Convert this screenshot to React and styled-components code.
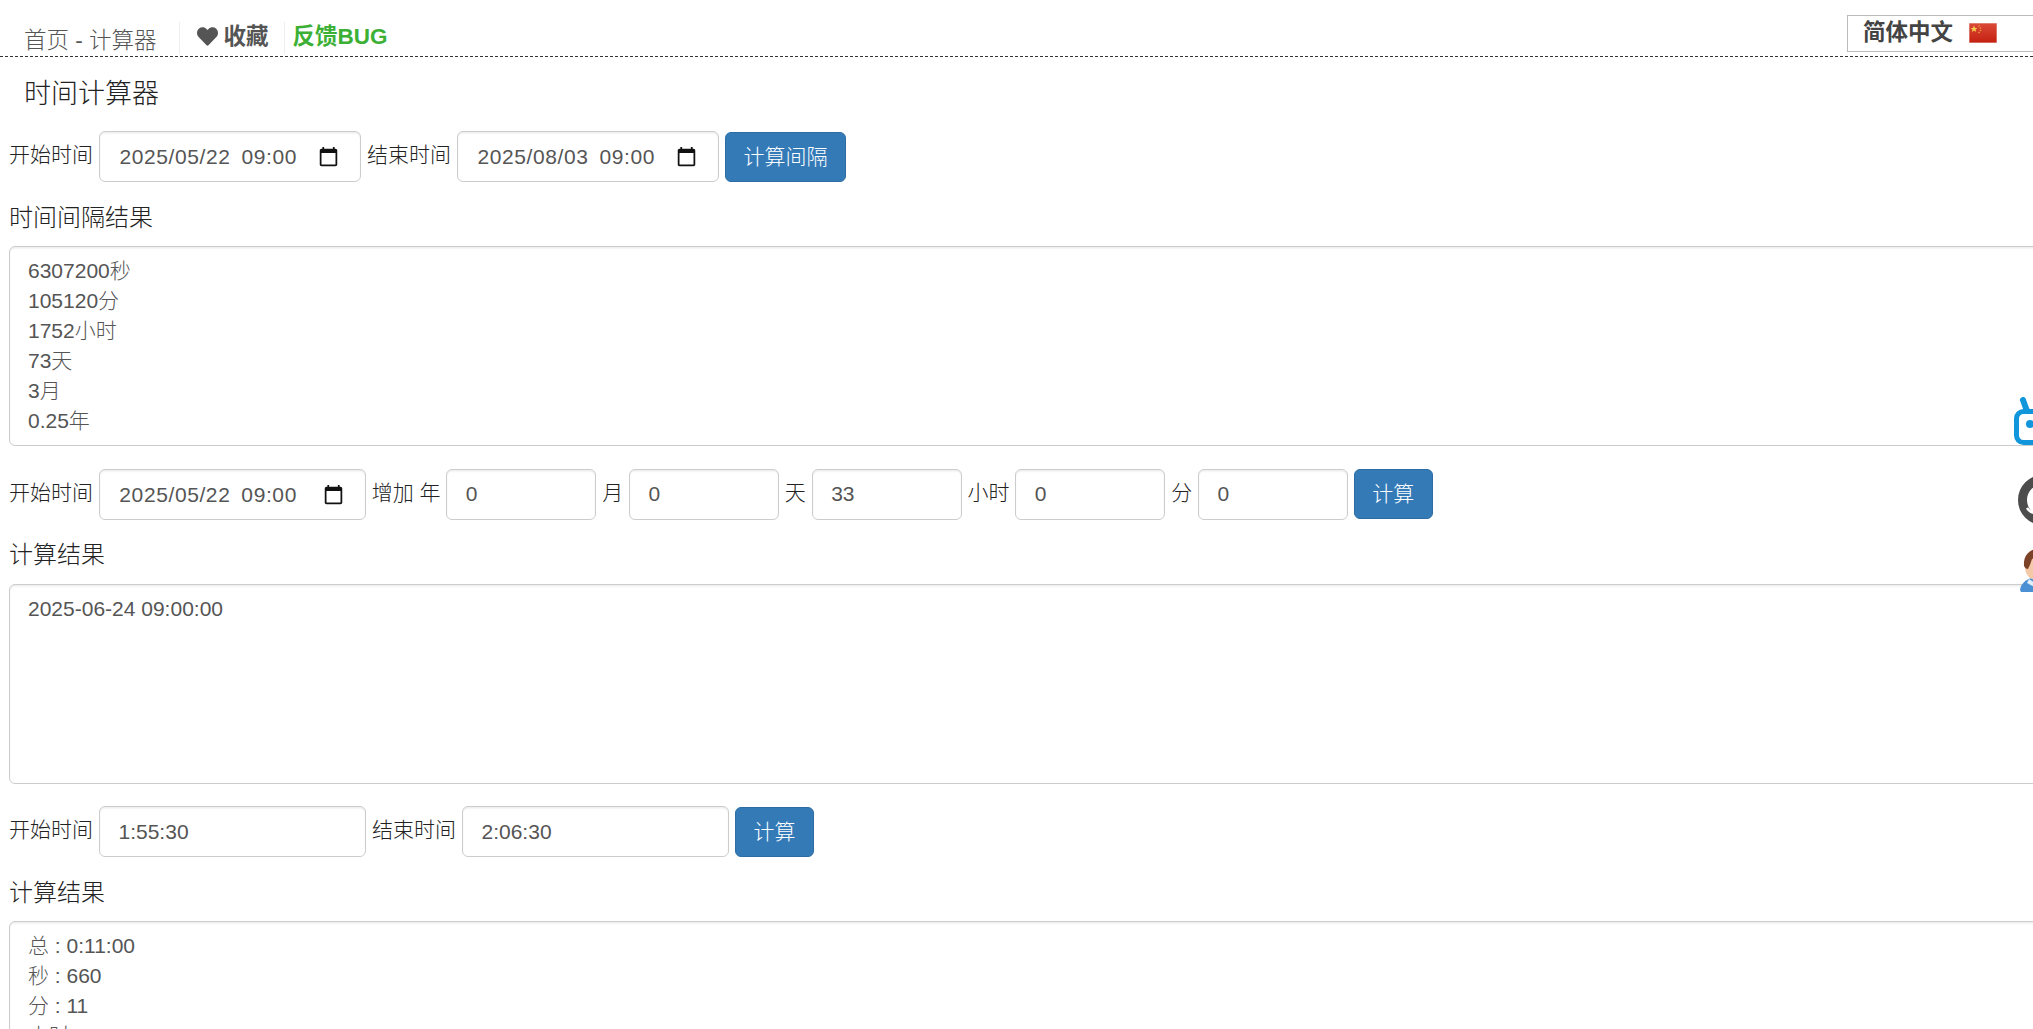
import React from 'react';
import styled, { createGlobalStyle } from 'styled-components';
import { FaHeart } from 'react-icons/fa';

const FONT = '"Liberation Sans", Arial, "Noto Sans CJK SC", sans-serif';

const GlobalStyle = createGlobalStyle`
  html, body {
    margin: 0;
    height: 100%;
    overflow: hidden;
    background: #fff;
  }
  body {
    font-family: ${FONT};
    font-size: 21px;
    font-weight: 300;
    line-height: 30px;
    color: #222;
  }
  * {
    box-sizing: border-box;
  }
`;

const Page = styled.div`
  width: 2033px;
  height: 1029px;
  overflow: hidden;
`;

const Header = styled.header`
  display: flex;
  align-items: flex-end;
  height: 57px;
  padding: 0 0 2px 24px;
  border-bottom: 1px dashed #333;
`;

const Crumb = styled.a`
  display: flex;
  align-items: center;
  height: 32px;
  padding-top: 5px;
  padding-right: 22px;
  font-size: 22.5px;
  color: #555;
`;

const NavItem = styled.a`
  display: flex;
  align-items: center;
  gap: 6px;
  height: 32px;
  padding: 0 ${(p) => p.$right}px 3px ${(p) => p.$left}px;
  border-left: 1px solid #eee;
  font-size: 22.5px;
  font-weight: bold;
  color: ${(p) => p.$color};
`;

const LangBox = styled.div`
  display: flex;
  align-items: center;
  flex-shrink: 0;
  align-self: flex-start;
  gap: 16px;
  width: 200px;
  height: 37px;
  margin: 15px -14px 0 auto;
  padding: 0 0 2px 15px;
  border: 1.5px solid #bbb;
  font-size: 22.5px;
  font-weight: bold;
  color: #444;
`;

const Main = styled.main`
  padding-left: 9px;
`;

const PageTitle = styled.h4`
  height: 30px;
  margin: 22px 0 22px 15px;
  font-size: 27px;
  font-weight: 300;
  line-height: 30px;
`;

const Row = styled.div`
  display: flex;
  align-items: center;
  gap: ${(p) => p.$gap || 5.84}px;
  height: 51px;
  margin-bottom: 22.5px;
`;

const Label = styled.label`
  flex-shrink: 0;
  padding-bottom: 3px;
  white-space: pre;
`;

const fieldBox = `
  height: 51px;
  border: 1.5px solid #ccc;
  border-radius: 6px;
  background: #fff;
  box-shadow: inset 0 1.5px 1.5px rgba(0, 0, 0, .075);
`;

const TextInput = styled.input`
  ${fieldBox}
  flex-shrink: 0;
  width: ${(p) => p.$width}px;
  padding: 0 18.5px;
  font: inherit;
  color: #555;
  outline: none;
`;

const DateField = styled.div`
  ${fieldBox}
  display: flex;
  align-items: center;
  flex-shrink: 0;
  width: ${(p) => p.$width}px;
  padding-right: 21px;
`;

const DateText = styled.input`
  flex: 1;
  min-width: 0;
  height: 100%;
  padding: 1px 0 0 19.5px;
  border: 0;
  background: transparent;
  font: inherit;
  letter-spacing: .6px;
  word-spacing: 4.5px;
  color: #555;
  outline: none;
`;

const CalendarSvg = styled.svg`
  flex-shrink: 0;
  width: 21px;
  height: 21px;
  fill: #111;
`;

const Button = styled.button`
  flex-shrink: 0;
  height: 50px;
  padding: 0 17.5px;
  border: 1.5px solid #2e6da4;
  border-radius: 6px;
  background: #337ab7;
  font: inherit;
  color: #fff;
`;

const SectionTitle = styled.h5`
  height: 26.5px;
  margin: 0 0 15px;
  font-size: 24px;
  font-weight: 300;
  line-height: 26px;
`;

const ResultArea = styled.textarea`
  ${fieldBox}
  display: block;
  width: 2100px;
  height: 200px;
  margin-bottom: 22.5px;
  padding: 9px 18px;
  font: inherit;
  color: #555;
  outline: none;
  resize: none;
  overflow: hidden;
`;

const SideIcons = styled.aside`
  position: fixed;
  top: 397px;
  left: 2014px;
  display: flex;
  flex-direction: column;
  width: 60px;
`;

const IconSvg = styled.svg`
  display: block;
  flex-shrink: 0;
  margin: ${(p) => p.$margin || '0'};
`;

const CalendarIcon = () => (
  <CalendarSvg viewBox="0 0 24 24">
    <path d="M20 3h-1V1h-2v2H7V1H5v2H4c-1.1 0-2 .9-2 2v16c0 1.1.9 2 2 2h16c1.1 0 2-.9 2-2V5c0-1.1-.9-2-2-2zm0 18H4V8h16v13z" />
  </CalendarSvg>
);

const DateInput = ({ width, value }) => (
  <DateField $width={width}>
    <DateText defaultValue={value} />
    <CalendarIcon />
  </DateField>
);

const ChinaFlag = () => (
  <svg width="28" height="20" viewBox="0 0 28 20">
    <defs>
      <linearGradient id="flagRed" x1="0" y1="0" x2="0" y2="1">
        <stop offset="0" stopColor="#dc4a38" />
        <stop offset="1" stopColor="#c4200f" />
      </linearGradient>
    </defs>
    <rect width="28" height="20" fill="url(#flagRed)" stroke="#e3b5ae" strokeWidth="1" />
    <polygon points="5,2.5 6,5 8.5,5 6.5,6.6 7.2,9 5,7.6 2.8,9 3.5,6.6 1.5,5 4,5" fill="#f6d04d" />
    <circle cx="10" cy="3" r=".8" fill="#e8a33d" />
    <circle cx="11.5" cy="5" r=".8" fill="#e8a33d" />
    <circle cx="11.5" cy="7.5" r=".8" fill="#e8a33d" />
    <circle cx="10" cy="9.5" r=".8" fill="#e8a33d" />
  </svg>
);

const BilibiliIcon = () => (
  <IconSvg width="60" height="48" viewBox="0 0 60 48">
    <path d="M13 14L9 3" fill="none" stroke="#1296db" strokeWidth="6" strokeLinecap="round" />
    <rect x="2.5" y="14.5" width="50" height="31" rx="7" fill="none" stroke="#1296db" strokeWidth="5" />
    <circle cx="16" cy="27" r="4" fill="#1296db" />
  </IconSvg>
);

const GithubIcon = () => (
  <IconSvg width="50" height="50" viewBox="0 0 50 50" $margin="30px 0 23px 4px">
    <circle cx="25" cy="25" r="20.5" fill="#fff" stroke="#4c4c4c" strokeWidth="9" />
    <ellipse cx="28" cy="22" rx="12" ry="12" fill="#4c4c4c" />
    <path d="M9 33c2 3 5 5 9 5" fill="none" stroke="#fff" strokeWidth="2.5" />
  </IconSvg>
);

const AvatarIcon = () => (
  <IconSvg width="44" height="44" viewBox="0 0 44 44" $margin="0 0 0 5px">
    <path d="M1 42c1-7 6-10 11-12l14 0 6 14H2z" fill="#4a90d2" />
    <ellipse cx="17" cy="19" rx="11" ry="13" fill="#f3c9a8" />
    <path d="M5 18C4 7 11 1 19 1c6 0 11 3 12 7-6 0-14 1-18 3-1 3-2 6-4 10-2 0-3-1-4-3z" fill="#7c4227" />
    <path d="M10 31l9 6 9-6 2 4-11 6-11-6z" fill="#dfeefa" />
  </IconSvg>
);

export default function App() {
  return (
    <Page>
      <GlobalStyle />
      <Header>
        <Crumb>首页 - 计算器</Crumb>
        <NavItem $left={17} $right={15} $color="#555">
          <FaHeart size={21} />
          收藏
        </NavItem>
        <NavItem $left={8} $right={0} $color="#3cb034">反馈BUG</NavItem>
        <LangBox>
          简体中文
          <ChinaFlag />
        </LangBox>
      </Header>
      <Main>
        <PageTitle>时间计算器</PageTitle>

        <Row $gap={6}>
          <Label>开始时间</Label>
          <DateInput width={262} value="2025/05/22 09:00" />
          <Label>结束时间</Label>
          <DateInput width={262} value="2025/08/03 09:00" />
          <Button>计算间隔</Button>
        </Row>
        <SectionTitle>时间间隔结果</SectionTitle>
        <ResultArea readOnly defaultValue={'6307200秒\n105120分\n1752小时\n73天\n3月\n0.25年'} />

        <Row>
          <Label>开始时间</Label>
          <DateInput width={267} value="2025/05/22 09:00" />
          <Label>增加 年</Label>
          <TextInput $width={150} defaultValue="0" />
          <Label>月</Label>
          <TextInput $width={150} defaultValue="0" />
          <Label>天</Label>
          <TextInput $width={150} defaultValue="33" />
          <Label>小时</Label>
          <TextInput $width={150} defaultValue="0" />
          <Label>分</Label>
          <TextInput $width={150} defaultValue="0" />
          <Button>计算</Button>
        </Row>
        <SectionTitle>计算结果</SectionTitle>
        <ResultArea readOnly defaultValue="2025-06-24 09:00:00" />

        <Row $gap={6}>
          <Label>开始时间</Label>
          <TextInput $width={267} defaultValue="1:55:30" />
          <Label>结束时间</Label>
          <TextInput $width={267} defaultValue="2:06:30" />
          <Button>计算</Button>
        </Row>
        <SectionTitle>计算结果</SectionTitle>
        <ResultArea readOnly defaultValue={'总 : 0:11:00\n秒 : 660\n分 : 11\n小时 : 0.1833'} />
      </Main>
      <SideIcons>
        <BilibiliIcon />
        <GithubIcon />
        <AvatarIcon />
      </SideIcons>
    </Page>
  );
}
